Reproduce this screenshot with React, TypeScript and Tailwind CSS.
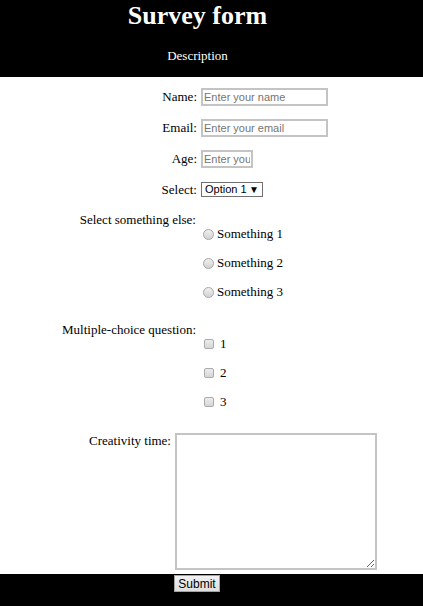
import React from 'react'

const serif = { fontFamily: '"Liberation Serif", "Times New Roman", serif' }

const TextRow = ({ label, placeholder, width }: { label: string; placeholder: string; width: string }) => (
  <div className="flex h-[31px] items-center">
    <label className="w-[198px] pr-[1px] text-right">{label}</label>
    <input
      type="text"
      placeholder={placeholder}
      className={`${width} ml-[3px] h-[18px] border-2 border-[#c4c4c4] bg-white px-[1px] font-['Liberation_Sans',Arial,sans-serif] text-[11px] leading-[14px] text-black placeholder:text-[#757575] outline-none`}
    />
  </div>
)

const App = (): React.JSX.Element => {
  const somethings = ['Something 1', 'Something 2', 'Something 3']
  const choices = ['1', '2', '3']

  return (
    <div className="flex min-h-screen flex-col bg-white text-[13px] leading-[14px] text-black" style={serif}>
      <header className="h-[77px] bg-black pr-[28px] text-center text-white">
        <h1 className="pt-[1px] text-[26px] font-bold leading-[30px]">Survey form</h1>
        <p className="mt-[17px] text-[13px] leading-[16px]">Description</p>
      </header>

      <form className="flex flex-1 flex-col pt-[4px]">
        <TextRow label="Name:" placeholder="Enter your name" width="w-[127px]" />
        <TextRow label="Email:" placeholder="Enter your email" width="w-[127px]" />
        <TextRow label="Age:" placeholder="Enter your age" width="w-[52px]" />

        <div className="flex h-[31px] items-center">
          <label className="w-[198px] pr-[1px] text-right">Select:</label>
          <div className="relative ml-[3px] flex h-[15px] w-[62px] items-center border border-[#707070] bg-white pl-[3px] font-['Liberation_Sans',Arial,sans-serif] text-[11px] leading-[13px]">
            <span>Option 1</span>
            <span className="absolute right-[3px] top-[0px] text-[10px] leading-[13px]">▼</span>
          </div>
        </div>

        <div className="mt-[8px] w-[196px] text-right">Select something else:</div>
        <div className="flex flex-col gap-[15px]">
          {somethings.map((s) => (
            <label key={s} className="flex h-[14px] items-center pl-[203px]">
              <input
                type="radio"
                name="something"
                className="m-0 h-[11px] w-[11px] appearance-none rounded-full border border-[#a6a6a6] bg-gradient-to-b from-[#f0f0f0] to-[#d2d2d2]"
              />
              <span className="ml-[3px]">{s}</span>
            </label>
          ))}
        </div>

        <div className="mt-[24px] w-[196px] text-right">Multiple-choice question:</div>
        <div className="flex flex-col gap-[15px]">
          {choices.map((c) => (
            <label key={c} className="flex h-[14px] items-center pl-[204px]">
              <input
                type="checkbox"
                className="m-0 h-[10px] w-[10px] appearance-none rounded-[2px] border border-[#ababab] bg-gradient-to-b from-[#ececec] to-[#d6d6d6]"
              />
              <span className="ml-[6px]">{c}</span>
            </label>
          ))}
        </div>

        <div className="mt-[24px] flex items-start">
          <label className="w-[171px] pt-[1px] text-right">Creativity time:</label>
          <textarea className="ml-[4px] h-[137px] w-[202px] border-2 border-[#c4c4c4] bg-white outline-none" />
        </div>

        <footer className="mt-[4px] flex-1 bg-black pl-[174px] pt-[1px]">
          <button
            type="submit"
            className="h-[17px] w-[46px] border border-[#a3a3a3] bg-gradient-to-b from-[#f2f2f2] to-[#dedede] font-['Liberation_Sans',Arial,sans-serif] text-[12px] leading-[14px] text-black"
          >
            Submit
          </button>
        </footer>
      </form>
    </div>
  )
}

export default App
